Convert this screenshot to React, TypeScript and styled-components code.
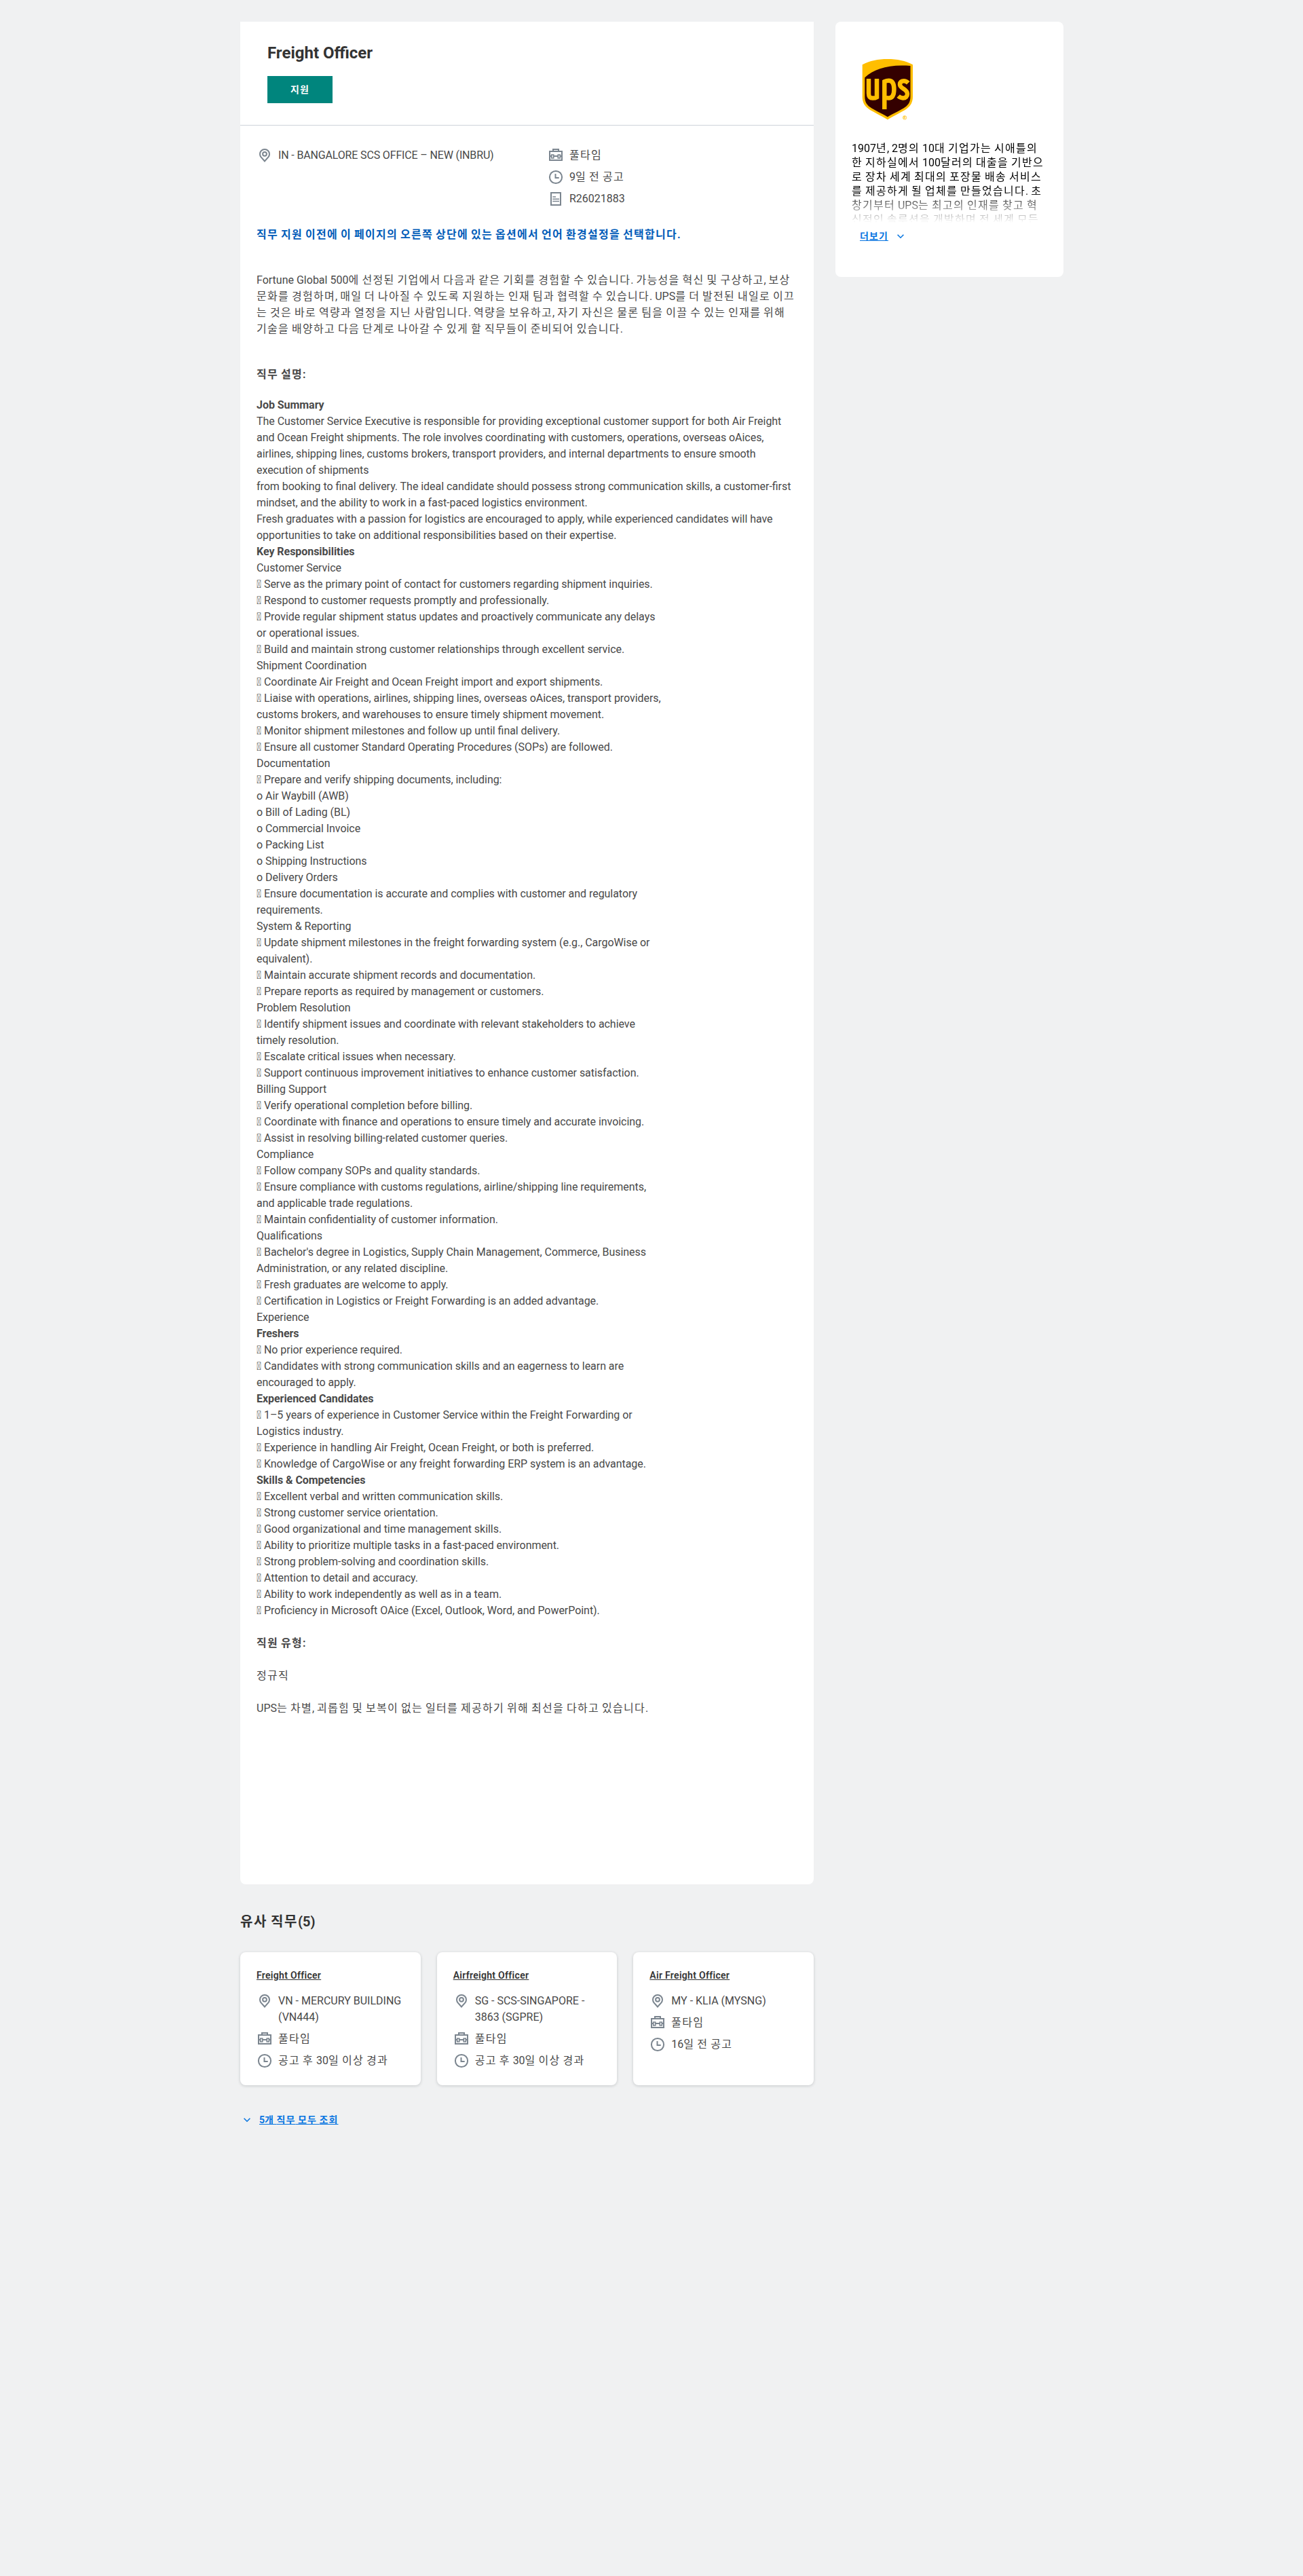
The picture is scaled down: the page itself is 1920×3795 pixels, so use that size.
import { Fragment } from "react";
import styled, { createGlobalStyle } from "styled-components";

type IconName = "location" | "type" | "posted" | "id";

const bullet = "\uf0b7";

const description = [
  "# Job Summary",
  "The Customer Service Executive is responsible for providing exceptional customer support for both Air Freight and Ocean Freight shipments. The role involves coordinating with customers, operations, overseas oAices, airlines, shipping lines, customs brokers, transport providers, and internal departments to ensure smooth execution of shipments",
  "from booking to final delivery. The ideal candidate should possess strong communication skills, a customer-first mindset, and the ability to work in a fast-paced logistics environment.",
  "Fresh graduates with a passion for logistics are encouraged to apply, while experienced candidates will have opportunities to take on additional responsibilities based on their expertise.",
  "# Key Responsibilities",
  "Customer Service",
  "* Serve as the primary point of contact for customers regarding shipment inquiries.",
  "* Respond to customer requests promptly and professionally.",
  "* Provide regular shipment status updates and proactively communicate any delays",
  "or operational issues.",
  "* Build and maintain strong customer relationships through excellent service.",
  "Shipment Coordination",
  "* Coordinate Air Freight and Ocean Freight import and export shipments.",
  "* Liaise with operations, airlines, shipping lines, overseas oAices, transport providers,",
  "customs brokers, and warehouses to ensure timely shipment movement.",
  "* Monitor shipment milestones and follow up until final delivery.",
  "* Ensure all customer Standard Operating Procedures (SOPs) are followed.",
  "Documentation",
  "* Prepare and verify shipping documents, including:",
  "o Air Waybill (AWB)",
  "o Bill of Lading (BL)",
  "o Commercial Invoice",
  "o Packing List",
  "o Shipping Instructions",
  "o Delivery Orders",
  "* Ensure documentation is accurate and complies with customer and regulatory",
  "requirements.",
  "System & Reporting",
  "* Update shipment milestones in the freight forwarding system (e.g., CargoWise or",
  "equivalent).",
  "* Maintain accurate shipment records and documentation.",
  "* Prepare reports as required by management or customers.",
  "Problem Resolution",
  "* Identify shipment issues and coordinate with relevant stakeholders to achieve",
  "timely resolution.",
  "* Escalate critical issues when necessary.",
  "* Support continuous improvement initiatives to enhance customer satisfaction.",
  "Billing Support",
  "* Verify operational completion before billing.",
  "* Coordinate with finance and operations to ensure timely and accurate invoicing.",
  "* Assist in resolving billing-related customer queries.",
  "Compliance",
  "* Follow company SOPs and quality standards.",
  "* Ensure compliance with customs regulations, airline/shipping line requirements,",
  "and applicable trade regulations.",
  "* Maintain confidentiality of customer information.",
  "Qualifications",
  "* Bachelor's degree in Logistics, Supply Chain Management, Commerce, Business",
  "Administration, or any related discipline.",
  "* Fresh graduates are welcome to apply.",
  "* Certification in Logistics or Freight Forwarding is an added advantage.",
  "Experience",
  "# Freshers",
  "* No prior experience required.",
  "* Candidates with strong communication skills and an eagerness to learn are",
  "encouraged to apply.",
  "# Experienced Candidates",
  "* 1–5 years of experience in Customer Service within the Freight Forwarding or",
  "Logistics industry.",
  "* Experience in handling Air Freight, Ocean Freight, or both is preferred.",
  "* Knowledge of CargoWise or any freight forwarding ERP system is an advantage.",
  "# Skills & Competencies",
  "* Excellent verbal and written communication skills.",
  "* Strong customer service orientation.",
  "* Good organizational and time management skills.",
  "* Ability to prioritize multiple tasks in a fast-paced environment.",
  "* Strong problem-solving and coordination skills.",
  "* Attention to detail and accuracy.",
  "* Ability to work independently as well as in a team.",
  "* Proficiency in Microsoft OAice (Excel, Outlook, Word, and PowerPoint).",
];

const similarJobs = [
  {
    title: "Freight Officer",
    location: "VN - MERCURY BUILDING (VN444)",
    type: "풀타임",
    posted: "공고 후 30일 이상 경과",
  },
  {
    title: "Airfreight Officer",
    location: "SG - SCS-SINGAPORE - 3863 (SGPRE)",
    type: "풀타임",
    posted: "공고 후 30일 이상 경과",
  },
  {
    title: "Air Freight Officer",
    location: "MY - KLIA (MYSNG)",
    type: "풀타임",
    posted: "16일 전 공고",
  },
];

// Hangul glyphs are set on a full em, Latin keeps its own widths
const Korean = ({ children }: { children: string }) => (
  <>
    {children
      .split(/([가-힣]+)/)
      .map((part, i) => (i % 2 ? <Hangul key={i}>{part}</Hangul> : part))}
  </>
);

const Icon = ({ name }: { name: IconName }) => (
  <IconSvg viewBox="0 0 24 24" aria-hidden="true">
    {name === "location" && (
      <>
        <path d="M12 20.5 6.6 14.4C5.5 13 5 11.6 5 10a7 7 0 0 1 14 0c0 1.6-.5 3-1.6 4.4Z" />
        <circle cx="12" cy="9.8" r="2.9" />
      </>
    )}
    {name === "type" && (
      <>
        <path d="M3 6h18v13H3zM8 6V3h8v3M3 13h2.7M8.7 13h6.6M18.3 13H21" />
        <path strokeWidth="1.7" d="M5.7 11h3v5h-3zM15.3 11h3v5h-3z" />
      </>
    )}
    {name === "posted" && (
      <>
        <circle cx="12" cy="12" r="9.1" />
        <path d="M11.5 7v6h5.2" />
      </>
    )}
    {name === "id" && (
      <>
        <path d="M5 3h14v18H5z" />
        <path strokeWidth="1.6" d="M7.3 9H12M7.3 12.3H17M7.3 15.5H17" />
      </>
    )}
  </IconSvg>
);

const Chevron = () => (
  <ChevronSvg viewBox="0 0 12 12" aria-hidden="true">
    <path d="m1.6 3.8 4.4 4.4 4.4-4.4" />
  </ChevronSvg>
);

const Meta = ({ icon, children }: { icon: IconName; children: string }) => (
  <MetaRow>
    <Icon name={icon} />
    <span>
      <Korean>{children}</Korean>
    </span>
  </MetaRow>
);

const Logo = () => (
  <LogoSvg viewBox="0 0 78 92" aria-label="UPS">
    <path
      fill="#ffbe00"
      d="M.7 8.3C11.5 2.5 24 0 37.9 0S64.3 2.5 75 8.3V55.5c0 8-3.2 13.7-9.3 18C59.5 77.8 49 82.5 37.9 89.2 26.7 82.5 16.2 77.8 10 73.5 3.9 69.2.7 63.5.7 55.5Z"
    />
    <path
      fill="#340000"
      d="M4.3 27.3C18 14 40 7.5 71.5 9.9V55.5c0 7-2.6 11.7-7.7 15.3C57.5 75.2 48 79.3 37.9 85.3 27.7 79.3 18.3 75.2 12 70.8 6.9 67.2 4.3 62.5 4.3 55.5Z"
    />
    <g fill="none" stroke="#ffbe00" strokeWidth="6.5">
      <path d="M10 29v21.5c0 5.3 2.3 7.1 6 7.1 2.5 0 4.5-.5 6-1.4V29" />
      <path d="M33.3 74V33.2c2-1 4-1.4 6.3-1.4 5.2 0 7.8 4 7.8 12.8 0 9-2.7 13-8 13-2.4 0-4.3-.5-6.1-1.4" />
      <path d="M68.3 35.3c-2-2-4.2-3.1-6.5-3.1-3.4 0-5.8 2-5.8 5 0 6.6 11 6.6 11 14 0 3.9-2.7 6.2-6.5 6.2-2.5 0-4.8-1-6.8-2.9" />
    </g>
    <circle cx="63.1" cy="86.3" r="2.7" fill="none" stroke="#ffbe00" strokeWidth=".7" />
    <text x="61.5" y="88" fontSize="4.6" fontWeight="700" fill="#ffbe00">R</text>
  </LogoSvg>
);

const App = () => (
  <>
    <GlobalStyle />
    <Page>
      <Main>
        <JobCard>
          <JobHeader>
            <JobTitle>Freight Officer</JobTitle>
            <ApplyButton>
              <Korean>지원</Korean>
            </ApplyButton>
          </JobHeader>
          <JobBody>
            <MetaColumns>
              <MetaList $tight>
                <Meta icon="location">IN - BANGALORE SCS OFFICE – NEW (INBRU)</Meta>
              </MetaList>
              <MetaList>
                <Meta icon="type">풀타임</Meta>
                <Meta icon="posted">9일 전 공고</Meta>
                <Meta icon="id">R26021883</Meta>
              </MetaList>
            </MetaColumns>
            <Notice>
              <Korean>
                직무 지원 이전에 이 페이지의 오른쪽 상단에 있는 옵션에서 언어 환경설정을 선택합니다.
              </Korean>
            </Notice>
            <Intro>
              <Korean>
                Fortune Global 500에 선정된 기업에서 다음과 같은 기회를 경험할 수 있습니다. 가능성을 혁신 및 구상하고,
                보상 문화를 경험하며, 매일 더 나아질 수 있도록 지원하는 인재 팀과 협력할 수 있습니다. UPS를 더 발전된
                내일로 이끄는 것은 바로 역량과 열정을 지닌 사람입니다. 역량을 보유하고, 자기 자신은 물론 팀을 이끌 수
                있는 인재를 위해 기술을 배양하고 다음 단계로 나아갈 수 있게 할 직무들이 준비되어 있습니다.
              </Korean>
            </Intro>
            <SectionLabel>
              <Korean>직무 설명:</Korean>
            </SectionLabel>
            <Description>
              {description.map((line, i) => (
                <Fragment key={i}>
                  {line.startsWith("# ") ? <b>{line.slice(2)}</b> : line.replace(/^\*/, bullet)}
                  <br />
                </Fragment>
              ))}
            </Description>
            <SectionLabel $loose>
              <Korean>직원 유형:</Korean>
            </SectionLabel>
            <Paragraph>
              <Korean>정규직</Korean>
            </Paragraph>
            <Paragraph>
              <Korean>UPS는 차별, 괴롭힘 및 보복이 없는 일터를 제공하기 위해 최선을 다하고 있습니다.</Korean>
            </Paragraph>
          </JobBody>
        </JobCard>

        <SimilarTitle>
          <Korean>유사 직무(5)</Korean>
        </SimilarTitle>
        <SimilarGrid>
          {similarJobs.map((job) => (
            <SimilarCard key={job.title}>
              <SimilarLink href="#">{job.title}</SimilarLink>
              <Meta icon="location">{job.location}</Meta>
              <Meta icon="type">{job.type}</Meta>
              <Meta icon="posted">{job.posted}</Meta>
            </SimilarCard>
          ))}
        </SimilarGrid>
        <ViewAll>
          <Chevron />
          <TextLink href="#">
            <Korean>5개 직무 모두 조회</Korean>
          </TextLink>
        </ViewAll>
      </Main>

      <Sidebar>
        <Logo />
        <About>
          <Korean>
            1907년, 2명의 10대 기업가는 시애틀의 한 지하실에서 100달러의 대출을 기반으로 장차 세계 최대의 포장물 배송
            서비스를 제공하게 될 업체를 만들었습니다. 초창기부터 UPS는 최고의 인재를 찾고 혁신적인 솔루션을 개발하며 전
            세계 모든
          </Korean>
        </About>
        <ReadMore>
          <TextLink href="#">
            <Korean>더보기</Korean>
          </TextLink>
          <Chevron />
        </ReadMore>
      </Sidebar>
    </Page>
  </>
);

export default App;

const GlobalStyle = createGlobalStyle`
  body {
    margin: 0;
    background: #f0f1f2;
    color: #494949;
    font-family: Roboto, "Noto Sans CJK KR", sans-serif;
    font-size: 16px;
    line-height: 24px;
  }

  * {
    box-sizing: border-box;
  }
`;

const Hangul = styled.span`
  letter-spacing: 0.08em;
`;

const Page = styled.div`
  display: flex;
  align-items: flex-start;
  gap: 32px;
  width: 1213px;
  min-height: 3795px;
  margin-left: 354px;
  padding-top: 32px;
`;

const Main = styled.main`
  width: 845px;
`;

const JobCard = styled.section`
  height: 2744px;
  background: #fff;
  border-radius: 0 0 8px 8px;
`;

const JobHeader = styled.header`
  height: 153px;
  padding: 32px 40px 0;
  border-bottom: 1px solid #ced3d9;
`;

const JobTitle = styled.h2`
  margin: 0 0 20px;
  color: #333;
  font-size: 24px;
  font-weight: 700;
  line-height: 28px;
`;

const ApplyButton = styled.button`
  display: block;
  width: 96px;
  height: 40px;
  padding: 0;
  border: 0;
  background: #00857d;
  color: #fff;
  font: 700 14px/20px Roboto, "Noto Sans CJK KR", sans-serif;
`;

const JobBody = styled.div`
  padding: 28px 24px 0;
`;

const MetaColumns = styled.div`
  display: grid;
  grid-template-columns: 429px 1fr;
  height: 121px;
`;

const MetaList = styled.div<{ $tight?: boolean }>`
  display: flex;
  flex-direction: column;
  letter-spacing: ${({ $tight }) => ($tight ? "-0.15px" : "normal")};
`;

const MetaRow = styled.div`
  display: flex;
  gap: 8px;
  padding: 4px 0;
`;

const IconSvg = styled.svg`
  flex: none;
  width: 24px;
  height: 24px;
  fill: none;
  stroke: #7b858f;
  stroke-width: 2;
`;

const Notice = styled.p`
  margin: 0 0 43px;
  color: #005cb9;
  font-weight: 700;
`;

const Intro = styled.p`
  margin: 0 0 43px;
`;

const SectionLabel = styled.h3<{ $loose?: boolean }>`
  margin: 0 0 ${({ $loose }) => ($loose ? 24 : 21)}px;
  font-size: 16px;
  font-weight: 700;
`;

const Description = styled.div`
  margin-bottom: 24px;
  letter-spacing: -0.045px;
  font-feature-settings: "liga" 1;
`;

const Paragraph = styled.p`
  margin: 0 0 24px;
`;

const SimilarTitle = styled.h2`
  margin: 43px 0 33px;
  color: #333;
  font-size: 20px;
  font-weight: 700;
  line-height: 24px;
`;

const SimilarGrid = styled.div`
  display: grid;
  grid-template-columns: repeat(3, 1fr);
  gap: 24px;
`;

const SimilarCard = styled.article`
  height: 196px;
  padding: 24px;
  background: #fff;
  border-radius: 8px;
  box-shadow: 0 1px 4px rgba(31, 38, 46, 0.2);
`;

const SimilarLink = styled.a`
  display: block;
  margin-bottom: 12px;
  color: #333;
  font-size: 14px;
  font-weight: 600;
  line-height: 20px;
  letter-spacing: 0.3px;
`;

const TextLink = styled.a`
  color: #0875e1;
  font-size: 14px;
  font-weight: 700;
  line-height: 20px;
`;

const ChevronSvg = styled.svg`
  width: 12px;
  height: 12px;
  fill: none;
  stroke: #0875e1;
  stroke-width: 1.6;
`;

const ViewAll = styled.div`
  display: flex;
  align-items: center;
  gap: 12px;
  margin-top: 41px;
  padding-left: 4px;
`;

const Sidebar = styled.aside`
  width: 336px;
  height: 376px;
  padding: 55px 24px 0;
  background: #fff;
  border-radius: 8px;
`;

const LogoSvg = styled.svg`
  display: block;
  width: 78px;
  height: 92px;
  margin: 0 0 29px 15px;
`;

const About = styled.p`
  height: 120px;
  margin: 0;
  overflow: hidden;
  color: #000;
  line-height: 21px;
  mask-image: linear-gradient(#000 60%, transparent);
`;

const ReadMore = styled.div`
  display: flex;
  align-items: center;
  gap: 12px;
  margin-top: 10px;
  padding-left: 12px;
`;
